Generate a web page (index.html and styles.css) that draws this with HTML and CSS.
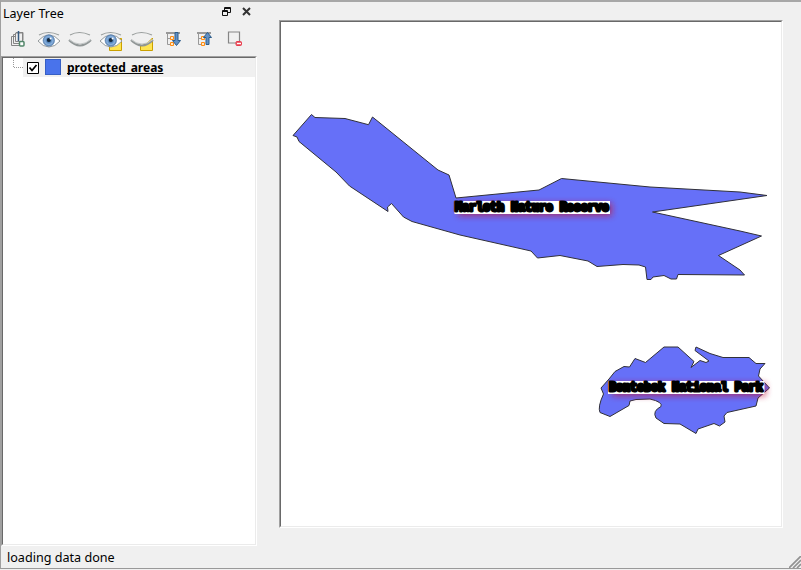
FILE: index.html
```html
<!DOCTYPE html>
<html lang="en">
<head>
<meta charset="utf-8">
<title>Layer Tree</title>
<link rel="stylesheet" href="styles.css">
</head>
<body>
<svg width="0" height="0" class="defs">
  <defs>
    <radialGradient id="iris"><stop offset="0" stop-color="#223a55"/><stop offset=".3" stop-color="#4a7cb4"/><stop offset=".7" stop-color="#8ab2de"/><stop offset="1" stop-color="#5881b4"/></radialGradient>
    <g id="eye">
      <path d="M1 10Q6 4 12 4Q18 4 23 10Q18 16 12 16Q6 16 1 10Z" fill="#fff" stroke="#92989a"/>
      <circle cx="11.8" cy="9.500" r="5.700" fill="url(#iris)" stroke="#5c82ae" stroke-width=".7"/>
      <circle cx="11.8" cy="9" r="2" fill="#14273b"/><circle cx="13.600" cy="7.500" r="1" fill="#fff"/>
      <path d="M2 4Q11 -1 22 4" fill="none" stroke="#999e9d" stroke-width="1.200"/>
    </g>
    <g id="lid">
      <path d="M2 4Q11 -1 22 4" fill="none" stroke="#999e9d" stroke-width="1.200"/>
      <path d="M1 9Q12 20 23 9" fill="none" stroke="#909696" stroke-width="2"/>
      <path d="M1 8.500Q12 17.500 23 8.500" fill="none" stroke="#c4c8c8"/>
    </g>
    <g id="tree">
      <path d="M1.500 2V12.500H4M1.500 6.500H4" fill="none" stroke="#999"/>
      <path d="M0 1H14" stroke="#999" stroke-width="2"/>
      <path d="M4.500 4.500h3v3h-3zM4.500 10.500h3v3h-3z" fill="#ffe8c8" stroke="#ff8c12"/>
    </g>
  </defs>
</svg>
<div class="window">
  <main class="content">
    <section class="dock">
      <header class="title"><span>Layer Tree</span>
        <svg class="float" width="9" height="9" viewBox="0 0 9 9"><path d="M2.500 3V.5h6v5H6M2.500 1.500h6M.5 3.500h5v5h-5zM.5 4.500h5" fill="none" stroke="#111"/></svg>
        <svg class="close" width="9" height="9" viewBox="0 0 9 9"><path d="M1 1l7 7M8 1l-7 7" stroke="#333" stroke-width="2"/></svg>
      </header>
      <nav class="tools">
        <svg width="24" height="22" viewBox="0 0 24 22"><g transform="translate(2 -1)"><path d="M7 6.500H3.500v9H12M7 4.500H5.500v9H12M8 2.500h7v8" fill="none" stroke="#858585"/><path d="M7.500 11.500V3h7v8.500z" fill="#eee" stroke="#858585"/><path d="M10.500 1v10" stroke="#355b80" stroke-width="1.500"/><rect x="11.500" y="11.500" width="4.500" height="4.500" rx="1" fill="#fff" stroke="#52866a" stroke-width="1.500"/></g></svg>
        <svg width="24" height="22" viewBox="0 0 24 22"><use href="#eye"/></svg>
        <svg width="24" height="22" viewBox="0 0 24 22"><use href="#lid"/></svg>
        <svg width="24" height="22" viewBox="0 0 24 22"><path d="M10.500 7.500h12v12h-12z" fill="#ffe450" stroke="#caa000"/><use href="#eye"/></svg>
        <svg width="24" height="22" viewBox="0 0 24 22"><path d="M10.500 19.500v-4.500q7-1 12-8v12.500z" fill="#ffe450" stroke="#caa000"/><use href="#lid"/></svg>
        <svg width="24" height="22" viewBox="0 0 24 22"><g transform="translate(5 1)"><use href="#tree"/><path d="M8.500 .5h3v8h2.500l-4 5-4-5h2.500z" transform="translate(.5 0)" fill="#6290c4" stroke="#2d5c8a"/></g></svg>
        <svg width="24" height="22" viewBox="0 0 24 22"><g transform="translate(5 1)"><use href="#tree"/><path d="M8.500 12.500h3v-7h2.500l-4-5-4 5h2.500z" transform="translate(.5 0)" fill="#6290c4" stroke="#2d5c8a"/></g></svg>
        <svg width="24" height="22" viewBox="0 0 24 22"><g transform="translate(1 -.5)"><path d="M14 12.500H4.500v-11h11v9" fill="none" stroke="#858585" stroke-width="1.200"/><rect x="12" y="11" width="5.500" height="4" rx="1" fill="#f16a75" stroke="#e6394b"/><path d="M13 13h4" stroke="#fff"/></g></svg>
      </nav>
      <div class="sunken tree"><div class="inner">
        <div class="row">
          <svg class="branch" width="10" height="12"><path d="M.5 0V9.500H10" fill="none" stroke="#999" stroke-dasharray="1 1"/></svg>
          <div class="item">
            <svg width="12" height="12" viewBox="0 0 12 12"><path d="M.5 .5h11v11H.5z" fill="#fff" stroke="#000"/><path d="M2.500 5.500l2.500 3L9.500 3" fill="none" stroke="#000" stroke-width="1.700"/></svg>
            <i class="swatch"></i><span class="name">protected_areas</span>
          </div>
        </div>
      </div></div>
    </section>
    <section class="sunken map"><div class="inner">
      <svg width="500" height="504" viewBox="281 22 500 504">
        <defs><filter id="shadow" x="-20%" y="-150%" width="140%" height="400%"><feGaussianBlur stdDeviation="3"/></filter></defs>
        <g class="areas">
          <path d="M293 135.500L311.500 114.500L315 117.500L345 118.500L368.500 124.700L372.500 117L438 170L449 175L456 198L539 190L561.500 178.500L650 187L740 192L767 195.500L652.500 212L740 231L761.500 236L718.500 255.500L740 270L744.500 275L678 274.500L676.500 279L671 279L664 275.500L653 277L651 279.500L647 279.500L645.500 267L639 265L623 264.500L597 266.500L588 261L560 255.500L537.500 258L531 251L460 235L412 221.500L403.500 217L391.500 203.500L387.500 207L388 211.500L349.500 186L336 172L299 141.500L297 137Z"/>
          <path d="M601 388L609 379L615 371.500L624 366.500L629.500 367L635 358.500L645.500 362.500L664 347L678 347L694 361.500L691 367.500L700 360.500L706 362.500L709 361L695 350.500L696 347L710 353.500L723 357.500L749 357.500L756 363.500L765 363.500L760 369L758.500 376L769.500 388L758 398L756 406L727 412.500L724 416L725 422L719.500 426L714 423.500L698 429L696 433.500L680 424L664 423.500L656 418Q652 411 661 406.500Q663 402 650 399L636 399.500L630 401L629 405.500L610 416.500L600 412.500Q597.500 407 603.500 394Z"/>
        </g>
        <rect class="glow" x="458" y="203" width="154" height="13"/>
        <rect class="glow" x="612" y="383" width="154" height="13"/>
        <rect class="label-box" x="454.500" y="201" width="155.500" height="13"/>
        <rect class="label-box" x="608" y="381" width="156.500" height="13"/>
        <text x="455" y="211" textLength="154">Marloth Nature Reserve</text>
        <text x="609" y="391" textLength="154">Bontebok National Park</text>
      </svg>
    </div></section>
  </main>
  <footer class="status"><span>loading data done</span><svg class="grip" width="12" height="12"><path d="M0 12L12 0M4 12L12 4M8 12L12 8" stroke="#929292" stroke-width="1.700"/></svg></footer>
</div>
</body>
</html>
```
FILE: styles.css
```css
* { box-sizing: border-box; }
body { margin: 0; background: #f0f0f0; font: 13px "Noto Sans", sans-serif; color: #000; overflow: hidden; }
.defs { display: block; }
svg { display: block; flex: none; }
.window { width: 801px; height: 569px; display: flex; flex-direction: column; border-top: 2px solid #a7a7a7; border-bottom: 1px solid #999; border-left: 1px solid #a0a0a0; }
.content { height: 544px; display: flex; }
.dock { width: 257px; display: flex; flex-direction: column; }
.title { height: 23px; display: flex; align-items: center; padding: 0 7px 0 2px; font-size: 12.500px; }
.title span { flex: 1; }
.float { margin: -5px 11px 0 0; }
.close { margin-top: -5px; }
.tools { height: 31px; display: flex; gap: 7px; padding: 6px 0 0 5px; }
.sunken { border: 1px solid #a0a0a0; border-right-color: #fff; border-bottom-color: #fff; }
.inner { height: 100%; background: #fff; border: 1px solid #696969; border-right-color: #ebebeb; border-bottom-color: #ebebeb; }
.tree { flex: none; width: 256px; height: 490px; }
.row { display: flex; height: 19px; }
.branch { margin-left: 10px; }
.item { display: flex; flex: 1; align-items: center; padding-left: 4px; background: #f0f0f0; }
.swatch { width: 16px; height: 16px; margin: -1px 6px 0 6px; background: #4973eb; border: 1px solid #365fc4; }
.name { font-size: 12px; font-weight: 700; text-decoration: underline; text-decoration-skip-ink: none; line-height: 18px; }
.map { width: 504px; height: 508px; margin: 18px 0 0 21px; }
.areas path { fill: #6670f8; stroke: #303039; stroke-width: 1; }
.glow { fill: #c01240; opacity: .7; filter: url(#shadow); }
.label-box { fill: #fff; }
.map text { font: 700 12px "Liberation Mono", monospace; fill: #000; stroke: #000; stroke-width: 2.800; stroke-linejoin: round; }
.status { flex: 1; display: flex; justify-content: space-between; align-items: center; padding-left: 6px; font-size: 12.600px; }
.grip { align-self: flex-end; }
```
